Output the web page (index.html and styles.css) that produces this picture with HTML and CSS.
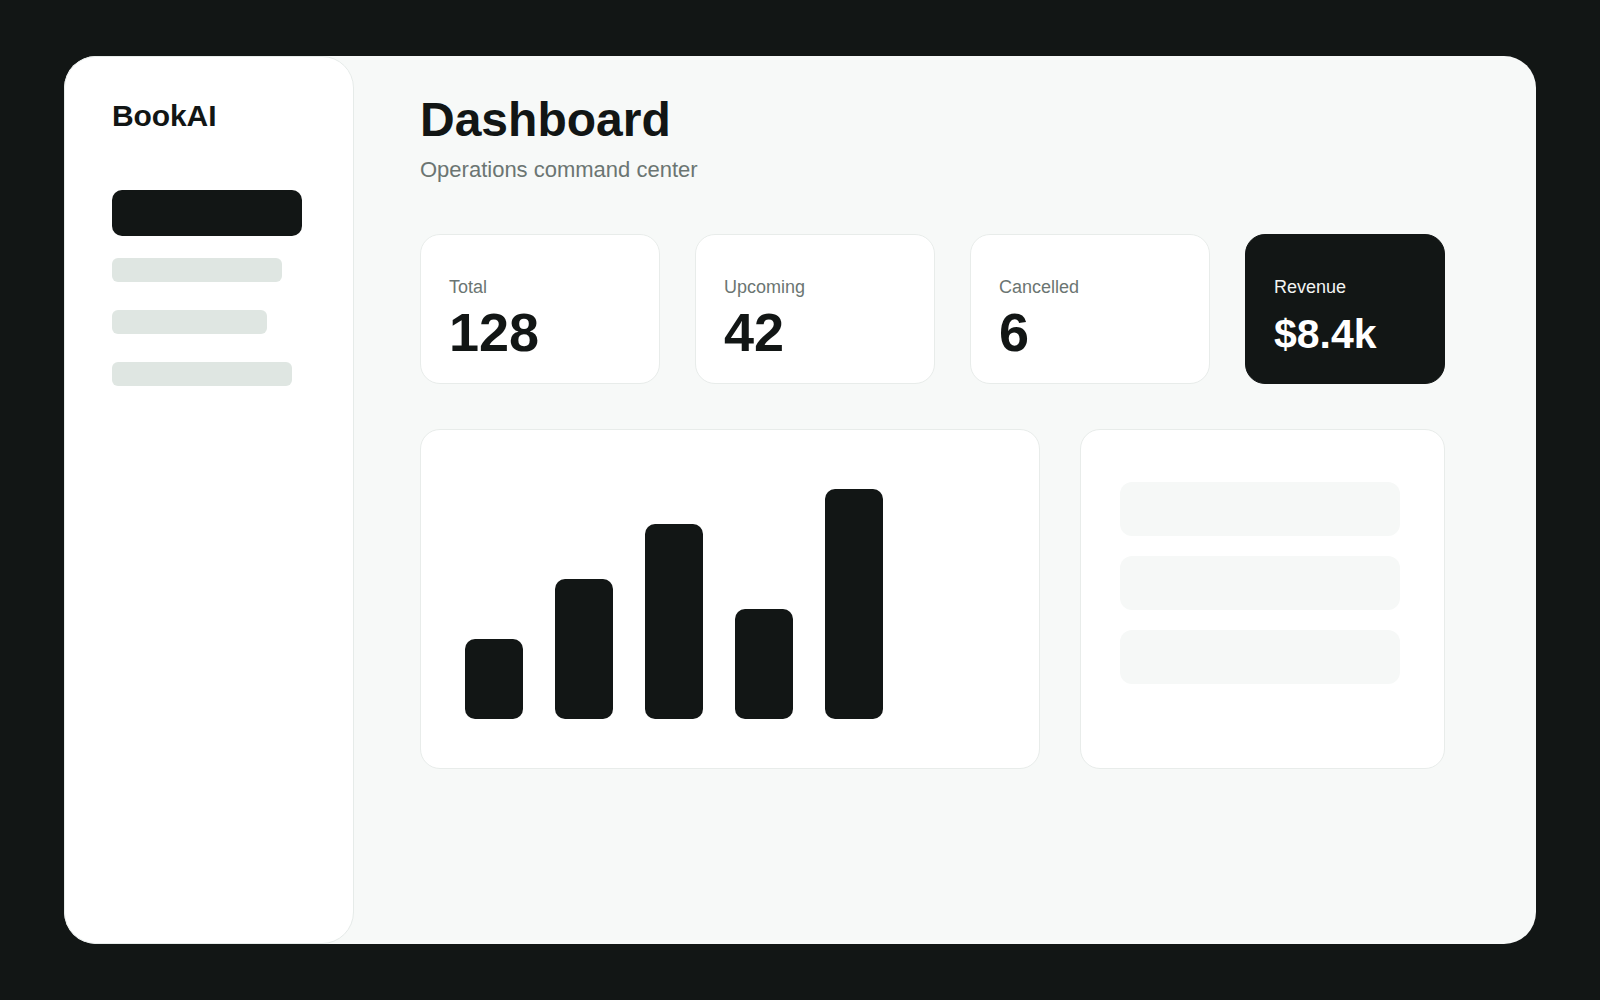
FILE: index.html
```html
<!DOCTYPE html>
<html lang="en">
<head>
<meta charset="utf-8">
<title>BookAI Dashboard</title>
<link rel="stylesheet" href="styles.css">
</head>
<body>
<div class="app">
  <aside class="sidebar">
    <div class="brand">BookAI</div>
    <nav class="nav">
      <div class="nav-active"></div>
      <div class="nav-item w170"></div>
      <div class="nav-item w155"></div>
      <div class="nav-item w180"></div>
    </nav>
  </aside>
  <main class="main">
    <h1 class="title">Dashboard</h1>
    <p class="subtitle">Operations command center</p>
    <section class="stats">
      <div class="stat">
        <div class="stat-label">Total</div>
        <div class="stat-value">128</div>
      </div>
      <div class="stat">
        <div class="stat-label">Upcoming</div>
        <div class="stat-value">42</div>
      </div>
      <div class="stat">
        <div class="stat-label">Cancelled</div>
        <div class="stat-value">6</div>
      </div>
      <div class="stat stat-dark">
        <div class="stat-label">Revenue</div>
        <div class="stat-value">$8.4k</div>
      </div>
    </section>
    <section class="bottom">
      <div class="chart-card">
        <div class="chart">
          <div class="bar" style="height:80px"></div>
          <div class="bar" style="height:140px"></div>
          <div class="bar" style="height:195px"></div>
          <div class="bar" style="height:110px"></div>
          <div class="bar" style="height:230px"></div>
        </div>
      </div>
      <div class="list-card">
        <div class="list-row"></div>
        <div class="list-row"></div>
        <div class="list-row"></div>
      </div>
    </section>
  </main>
</div>
</body>
</html>
```
FILE: styles.css
```css
* { box-sizing: border-box; }

html, body {
  margin: 0;
  padding: 0;
}

body {
  background: #121615;
  font-family: "Liberation Sans", Arial, sans-serif;
  color: #121615;
}

.app {
  margin: 56px 64px;
  height: 888px;
  border-radius: 32px;
  background: #f7f9f8;
  display: flex;
  overflow: hidden;
}

.sidebar {
  width: 290px;
  flex: none;
  background: #ffffff;
  border: 1px solid #e6ebe9;
  border-radius: 32px;
  padding: 42px 47px;
}

.brand {
  font-size: 30px;
  font-weight: 700;
  line-height: 1.15;
  letter-spacing: -0.1px;
}

.nav {
  margin-top: 56px;
  display: flex;
  flex-direction: column;
}

.nav-active {
  width: 190px;
  height: 46px;
  border-radius: 10px;
  background: #121615;
  margin-bottom: 22px;
}

.nav-item {
  height: 24px;
  border-radius: 6px;
  background: #dfe6e2;
  margin-bottom: 28px;
}

.w170 { width: 170px; }
.w155 { width: 155px; }
.w180 { width: 180px; }

.main {
  flex: 1;
  padding: 36px 0 0 66px;
}

.title {
  margin: 0;
  font-size: 48px;
  font-weight: 700;
  line-height: 1.15;
}

.subtitle {
  margin: 10px 0 0;
  font-size: 22px;
  line-height: 1.15;
  color: #6b7572;
}

.stats {
  margin-top: 52px;
  display: grid;
  grid-template-columns: 240px 240px 240px 200px;
  gap: 35px;
}

.stat {
  height: 150px;
  background: #ffffff;
  border: 1px solid #e8ecea;
  border-radius: 20px;
  padding: 42px 28px 0;
}

.stat-label {
  font-size: 18px;
  line-height: 1.15;
  color: #6b7572;
}

.stat-value {
  margin-top: 3px;
  font-size: 54px;
  font-weight: 700;
  line-height: 1.15;
  color: #121615;
}

.stat-dark {
  background: #121615;
  border-color: #121615;
}

.stat-dark .stat-label {
  color: #f2f4f3;
}

.stat-dark .stat-value {
  margin-top: 13px;
  font-size: 41px;
  color: #ffffff;
}

.bottom {
  margin-top: 45px;
  display: grid;
  grid-template-columns: 620px 365px;
  gap: 40px;
}

.chart-card {
  height: 340px;
  background: #ffffff;
  border: 1px solid #e8ecea;
  border-radius: 20px;
  padding: 49px 44px;
}

.chart {
  height: 240px;
  display: flex;
  align-items: flex-end;
  gap: 32px;
}

.bar {
  width: 58px;
  border-radius: 10px;
  background: #121615;
}

.list-card {
  height: 340px;
  background: #ffffff;
  border: 1px solid #e8ecea;
  border-radius: 20px;
  padding: 52px 0 0 39px;
  display: flex;
  flex-direction: column;
  gap: 20px;
}

.list-row {
  width: 280px;
  height: 54px;
  border-radius: 12px;
  background: #f6f8f7;
}
```
